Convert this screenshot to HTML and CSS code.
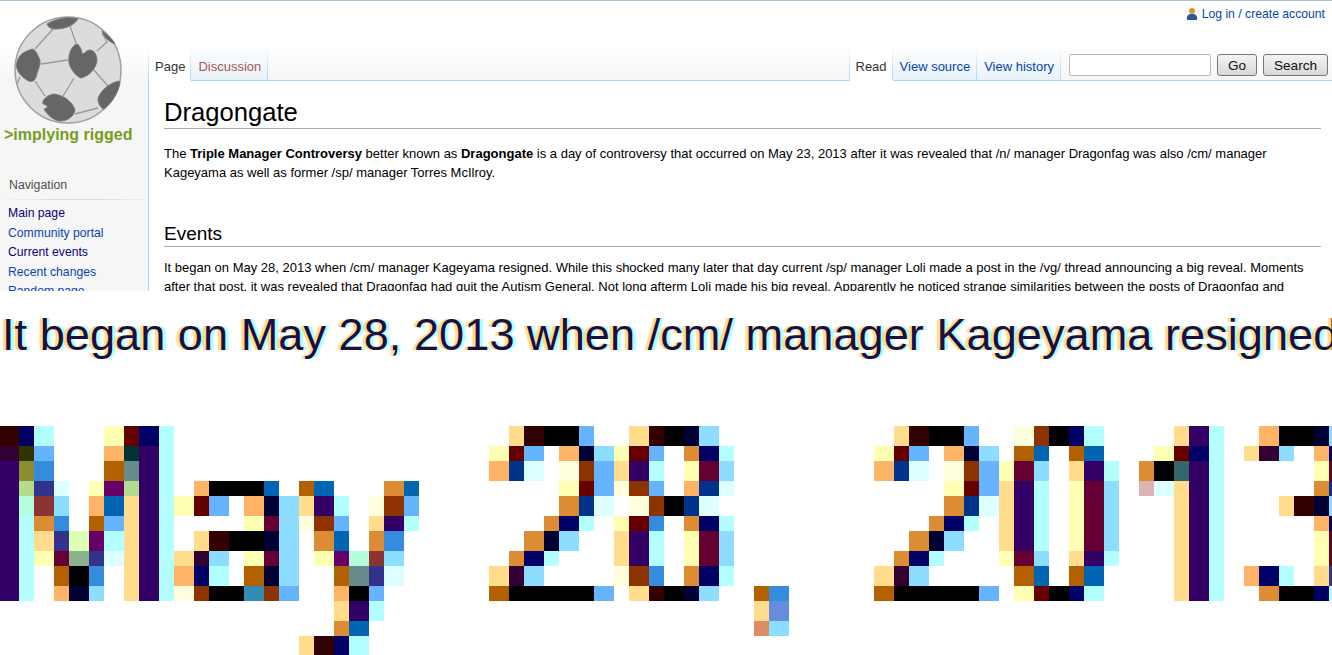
FILE: index.html
```html
<!DOCTYPE html>
<html lang="en">
<head>
    <meta charset="UTF-8">
    <title>Dragongate</title>
    <link rel="stylesheet" href="styles.css">
</head>
<body>
    <section class="wiki">
        <aside class="sidebar">
            <svg class="logo" width="130" height="125" viewBox="0 0 130 125">
                <circle cx="68" cy="69" r="53" fill="#dcdcdc" stroke="#a0a0a0" stroke-width="1.5"/>
                <g fill="none" stroke="#999" stroke-width="1.3">
                    <path d="M76 42 70 25M97 50 107 41 102 32M93 68 108 85M74 77 63 95M68 59 41 63M53 28 35 48M35 80 45 95M75 113 98 107M17 83 20 76"/>
                </g>
                <g fill="#666" stroke="#777" stroke-width="1">
                    <path d="M47 23C55 18 68 15 78 18 74 24 66 28 55 28 51 28 48 26 47 23Z"/>
                    <path d="M102 30C108 34 113 39 115 43 109 41 104 36 102 30Z"/>
                    <path d="M76 43C70 47 67 57 70 65 73 72 78 76 81 77 88 75 95 70 97 60 97 52 92 47 87 50 84 52 83 54 82 52 81 47 79 43 76 43Z"/>
                    <path d="M33 48C25 50 19 53 17 61 15 68 20 75 27 79 31 82 35 80 36 76 38 68 42 62 39 57 37 52 35 49 33 48Z"/>
                    <path d="M54 93C47 94 42 99 43 103 48 104 49 107 44 108 47 113 52 119 60 120 68 120 74 115 75 109 73 103 67 95 54 93Z"/>
                    <path d="M119 80C110 82 102 88 98 97 98 104 102 108 104 108 112 102 118 92 120 82Z"/>
                </g>
            </svg>
            <div class="site-name">&gt;implying rigged</div>
            <nav class="portal">
                <h5>Navigation</h5>
                <ul>
                    <li class="seen">Main page</li>
                    <li>Community portal</li>
                    <li class="seen">Current events</li>
                    <li>Recent changes</li>
                    <li>Random page</li>
                </ul>
            </nav>
        </aside>
        <div class="page">
            <div class="personal">
                <svg width="12" height="13" viewBox="0 0 12 13">
                    <path d="M1 13C0 8 3 7 6 7S12 8 11 13Z" fill="#2f5a94"/>
                    <circle cx="6" cy="4" r="3" fill="#d0963a"/>
                </svg>
                <a href="#">Log in / create account</a>
            </div>
            <div class="head">
                <ul class="tabs">
                    <li class="current">Page</li>
                    <li class="missing">Discussion</li>
                </ul>
                <div class="head-right">
                    <ul class="tabs">
                        <li class="current">Read</li>
                        <li>View source</li>
                        <li>View history</li>
                    </ul>
                    <form class="search">
                        <input type="text">
                        <button type="button" class="btn-go">Go</button>
                        <button type="button" class="btn-search">Search</button>
                    </form>
                </div>
            </div>
            <main class="content">
                <h1>Dragongate</h1>
                <p>The <b>Triple Manager Controversy</b> better known as <b>Dragongate</b> is a day of controversy that occurred on May 23, 2013 after it was revealed that /n/ manager Dragonfag was also /cm/ manager Kageyama as well as former /sp/ manager Torres McIlroy.</p>
                <h2>Events</h2>
                <p>It began on May 28, 2013 when /cm/ manager Kageyama resigned. While this shocked many later that day current /sp/ manager Loli made a post in the /vg/ thread announcing a big reveal. Moments after that post, it was revealed that Dragonfag had quit the Autism General. Not long afterm Loli made his big reveal. Apparently he noticed strange similarities between the posts of Dragonfag and</p>
            </main>
        </div>
    </section>

    <section class="zoom-line">It began on May 28, 2013 when /cm/ manager Kageyama resigned</section>

    <section class="mosaic" id="mosaic" aria-label="May 28, 2013"></section>

    <script>
        const palette = {
            A: '#330000', N: '#000066', c: '#b3ffff', y: '#ffffb3', r: '#660000', p: '#330033',
            G: '#333300', b: '#66b3ff', o: '#ffb366', T: '#003333', P: '#330066', H: '#8c8c33',
            B: '#338cdd', O: '#b36000', g: '#668c8c', L: '#b3dd8c', I: '#33338c', C: '#ddffff',
            M: '#660066', m: '#b3ffdd', R: '#8c3333', s: '#8cddff', f: '#ffdd8c', U: '#0066b3',
            D: '#dd8c33', K: '#000000', l: '#ffffdd', w: '#660033', v: '#000033', E: '#8c3300',
            n: '#ddffb3', S: '#8cb38c', Z: '#00338c', t: '#338cb3', j: '#668cdd', d: '#dd8c66',
            e: '#ddb3b3', q: '#336666'
        };

        // one row per source pixel line: May | 28, | 2013
        const rows = [
            'ANc...yrNc|.fAKKb..fAKvs|.fAKKb..lEKNc....fPc..oKKvs',
            'pGb...oTPc|yrb.ovsyrb.DNc|yrb.ovs.OU.OU...yrNc.fps.oN',
            'PHB...OgPc|oZC.lEbfPc.yws|oZC.lEbyws.fPc.DKqPc.....yw',
            'PLIC.yMLPc.oKKKU.OU...DU|....yrblEb.oZC|....yrbfPc.yws.eCfPc.....DZ',
            'PmRs.oUfPcyrb.ovsfPc.lEb|....DZC.lEKZC|....DZCfPc.yws...fPc...fAvs',
            'PcDB.ObfPc....ywslEb.fPc|...DNc.yrB.DNc|...DNc.fPc.yws...fPc.....oN',
            'PcfInMcfPc.fAKKvs.DU.DB.|..Dvs..fPc.yws|..Dvs..fPc.yws...fPc.....yw',
            'PcywSICfPcfps.yws.yMmRs|.DNc...fPc.yws|.DNc...yws.fPc...fPc.....yw',
            'Pc.OKB.fPcoNc.Ovs..OgIC|fps....lEB.DNc|fps.....OU.OU....fPc.oNc.fI',
            'Pc.ovs.fPclEKKtEb..oKb|OKKKKKb.fAKvs..OB|OKKKKKb.yrKNc....fPc..DKKNc',
            '...................fPc|...............fj|',
            '...................DU|...............ds|',
            '.................fANc||'
        ];

        const mosaic = document.getElementById('mosaic');
        rows.forEach(row => {
            const parts = row.split('|');
            const line = parts[0].padEnd(28, '.') + parts[1].padEnd(22, '.') + parts[2].padEnd(27, '.');
            for (const ch of line) {
                const cell = document.createElement('i');
                if (ch !== '.') cell.style.background = palette[ch];
                mosaic.appendChild(cell);
            }
        });
    </script>
</body>
</html>
```

FILE: styles.css
```css
/* General Styles */
html, body {
    margin: 0;
    padding: 0;
    background-color: #fff;
    overflow: hidden;
}

body {
    font-family: "Liberation Sans", Arial, sans-serif;
    color: #000;
}

/* Wiki page at the top */
.wiki {
    display: flex;
    box-sizing: border-box;
    height: 291px;
    overflow: hidden;
    border-top: 1px solid #a7c1d8;
    background: linear-gradient(#fff 44px, #f6f6f6 80px);
}

.sidebar {
    width: 148px;
    flex: none;
}

.logo {
    display: block;
}

.site-name {
    padding-left: 4px;
    font-size: 16px;
    line-height: 18px;
    font-weight: bold;
    color: #779c1e;
    white-space: nowrap;
}

.portal {
    margin-top: 34px;
}

.portal h5 {
    margin: 0;
    padding: 0 0 7px 9px;
    font-size: 12.3px;
    line-height: 14px;
    font-weight: normal;
    color: #4d4d4d;
    border-bottom: 1px solid #e4e4e4;
    border-image: linear-gradient(to right, #f6f6f6, #dedede 35%, #dedede 70%, #f0f0f0) 1;
}

.portal ul {
    list-style: none;
    margin: 4px 0 0;
    padding: 0 0 0 8px;
}

.portal li {
    font-size: 12.2px;
    line-height: 19.6px;
    color: #0645ad;
}

.portal li.seen {
    color: #0b0080;
}

.page {
    flex: 1;
    min-width: 0;
}

.personal {
    display: flex;
    justify-content: flex-end;
    align-items: flex-start;
    gap: 4px;
    box-sizing: border-box;
    height: 28px;
    padding: 6px 7px 0 0;
    font-size: 12.2px;
}

.personal a {
    color: #0645ad;
    text-decoration: none;
}

.head {
    display: flex;
    justify-content: space-between;
    position: relative;
    height: 52px;
}

.head-right {
    display: flex;
}

.tabs {
    display: flex;
    align-items: flex-end;
    list-style: none;
    margin: 0;
    padding: 0 0 0 1px;
    height: 52px;
    background: linear-gradient(#fff, #a7d7f9) left bottom / 1px 36px no-repeat;
}

.tabs li {
    box-sizing: border-box;
    height: 36px;
    padding: 14px 7px 0 7px;
    font-size: 13px;
    line-height: 15px;
    color: #0645ad;
    white-space: nowrap;
    background: linear-gradient(#fff, #a7d7f9) right / 1px 100% no-repeat, linear-gradient(#fff, #e8f2f8);
    border-bottom: 1px solid #a7d7f9;
}

.tabs li.current {
    padding: 14px 6px 0 6px;
    color: #333;
    background: linear-gradient(#fff, #a7d7f9) right / 1px 100% no-repeat, #fff;
    border-bottom-color: #fff;
}

.tabs li.missing {
    color: #a55858;
}

.search {
    display: flex;
    align-items: flex-start;
    gap: 6px;
    padding: 25px 4px 0 8px;
    width: 271px;
    box-sizing: border-box;
    border-bottom: 1px solid #a7d7f9;
}

.search input {
    box-sizing: border-box;
    width: 142px;
    height: 22px;
    padding: 0;
    background: #fff;
    border: 1px solid #bbb;
    border-radius: 2px;
}

.search button {
    box-sizing: border-box;
    height: 22px;
    padding: 0;
    font-family: "Liberation Sans", Arial, sans-serif;
    font-size: 13.6px;
    color: #111;
    background: linear-gradient(#f4f4f4, #d8d8d8);
    border: 1px solid #777;
    border-radius: 3px;
}

.btn-go {
    width: 40px;
}

.btn-search {
    width: 65px;
}

.content {
    margin-top: -1px;
    padding: 16px 11px 0 15px;
    height: 240px;
    background-color: #fff;
    border-top: 1px solid #a7d7f9;
    border-left: 1px solid #a7d7f9;
}

.content h1 {
    margin: 0 0 15px;
    font-size: 25.6px;
    line-height: 31px;
    font-weight: normal;
    border-bottom: 1px solid #aaa;
}

.content h2 {
    margin: 41px 0 11px;
    padding-bottom: 1px;
    font-size: 19px;
    line-height: 22px;
    font-weight: normal;
    border-bottom: 1px solid #aaa;
}

.content p {
    margin: 0;
    font-size: 13px;
    line-height: 19px;
}

/* Magnified text line */
.zoom-line {
    box-sizing: border-box;
    height: 135px;
    padding: 19px 0 0 2px;
    overflow: hidden;
    font-size: 45.2px;
    line-height: 50px;
    white-space: nowrap;
    color: #1a0f40;
    text-shadow: -3px 0 #ffdd8c, 3px 0 #b3ffff;
}

/* Single pixels of the text at full magnification */
.mosaic {
    display: grid;
    grid-template-columns: repeat(38, 20px 15px) 20px;
    grid-auto-rows: 20px 15px;
    height: 229px;
    margin-left: -1px;
    overflow: hidden;
}

.mosaic i {
    display: block;
}
```
